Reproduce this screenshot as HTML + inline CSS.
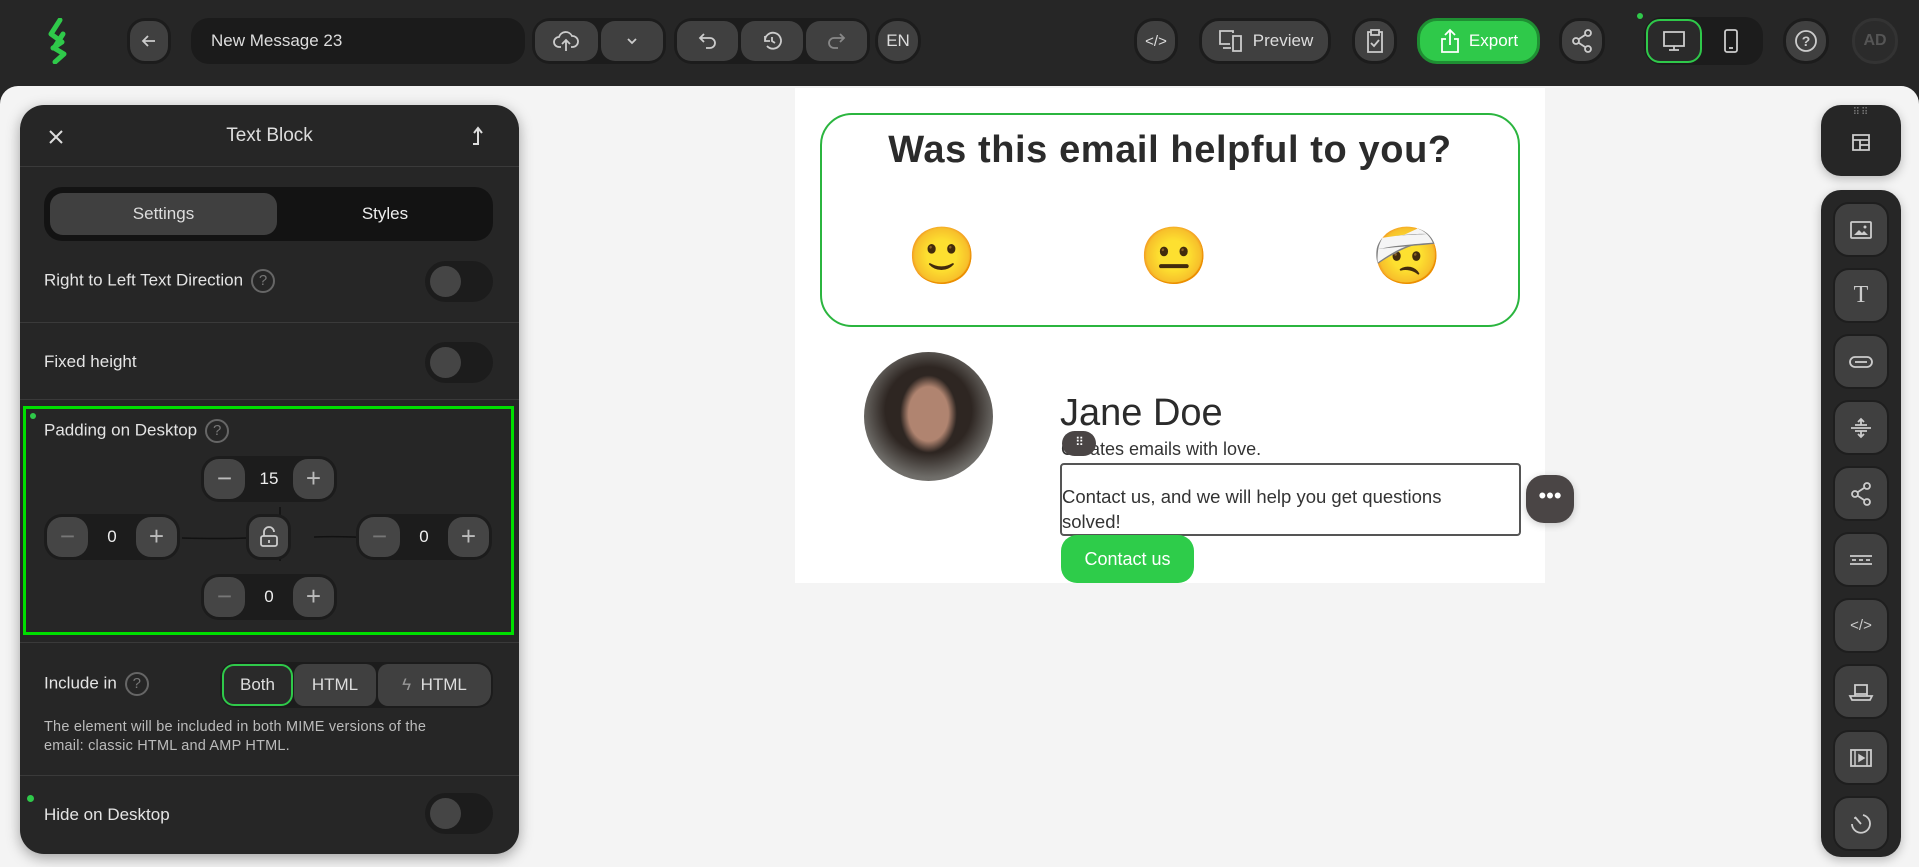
<!DOCTYPE html>
<html><head><meta charset="utf-8"><style>
*{box-sizing:border-box;margin:0;padding:0}
body{width:1919px;height:867px;background:#262626;position:relative;overflow:hidden;font-family:"Liberation Sans",sans-serif;color:#e6e6e6}
.a{position:absolute}
.canvas{left:0;top:86px;width:1919px;height:781px;background:#f4f4f4;border-radius:18px 18px 0 0}
.btn{position:absolute;background:#404040;border:3px solid #1c1c1c;border-radius:16px;display:flex;align-items:center;justify-content:center;color:#ddd;font-size:17px}
.grp{position:absolute;background:#1c1c1c;border-radius:18px;display:flex;padding:3px;gap:3px}
.grp div{background:#404040;border-radius:14px;flex:1;display:flex;align-items:center;justify-content:center}
svg{display:block}
.panel{left:20px;top:105px;width:499px;height:749px;background:#262626;border-radius:24px;box-shadow:0 4px 14px rgba(0,0,0,.35)}
.sep{position:absolute;left:0;width:499px;height:1px;background:#3a3a3a}
.lbl{position:absolute;font-size:17px;color:#e4e4e4}
.tog{position:absolute;width:68px;height:41px;border-radius:21px;background:#1c1c1c}
.tog:after{content:"";position:absolute;left:5px;top:5px;width:31px;height:31px;border-radius:50%;background:#454545}
.q{display:inline-block;width:24px;height:24px;border:2px solid #666;border-radius:50%;color:#777;font-size:15px;text-align:center;line-height:20px;vertical-align:middle;margin-left:8px}
.step{position:absolute;width:136px;height:46px;background:#1c1c1c;border-radius:18px}
.step .m,.step .p{position:absolute;top:3px;width:41px;height:40px;background:#454545;border-radius:15px;color:#bbb;font-size:26px;text-align:center;line-height:38px}
.step .m{left:3px}.step .p{right:3px}
.step .v{position:absolute;left:0;right:0;text-align:center;top:13px;font-size:17px;color:#eee}
.tb{position:absolute;left:12px;width:56px;height:55px;background:#404040;border:2px solid #1e1e1e;border-radius:16px;display:flex;align-items:center;justify-content:center}
</style></head><body>
<div class="a canvas"></div>

<!-- top bar -->
<svg class="a" style="left:46px;top:18px" width="24" height="46" viewBox="0 0 24 46"><path d="M14 2 L5 16 L16 24 L7 30 M17 16 L8 30 L18 36 L9 44" stroke="#2fc94a" stroke-width="5" fill="none" stroke-linecap="round" stroke-linejoin="round"/></svg>
<div class="btn" style="left:127px;top:18px;width:44px;height:46px;border-radius:18px"><svg width="18" height="18" viewBox="0 0 18 18"><path d="M15 9H3M8 4L3 9l5 5" stroke="#ccc" stroke-width="1.8" fill="none"/></svg></div>
<div class="a" style="left:191px;top:18px;width:334px;height:46px;background:#1b1b1b;border-radius:18px;font-size:17px;color:#ddd;padding:13px 20px">New Message 23</div>
<div class="grp" style="left:532px;top:18px;width:134px;height:46px"><div><svg width="26" height="24" viewBox="0 0 26 24"><path d="M8 18H6a5 5 0 0 1 0-10 7 7 0 0 1 13-1 5 5 0 0 1 1 11h-2M13 22V11M9 15l4-4 4 4" stroke="#ccc" stroke-width="1.8" fill="none"/></svg></div><div><svg width="14" height="10" viewBox="0 0 14 10"><path d="M3 3l4 4 4-4" stroke="#ccc" stroke-width="1.8" fill="none"/></svg></div></div>
<div class="grp" style="left:674px;top:18px;width:196px;height:46px"><div><svg width="22" height="22" viewBox="0 0 22 22"><path d="M7 4L3 8l4 4M3 8h10a5 5 0 0 1 0 10H9" stroke="#ccc" stroke-width="1.8" fill="none"/></svg></div><div><svg width="22" height="22" viewBox="0 0 22 22"><path d="M4 11a8 8 0 1 1 2 5M4 6v5h5M11 7v4l3 2" stroke="#ccc" stroke-width="1.8" fill="none"/></svg></div><div><svg width="22" height="22" viewBox="0 0 22 22"><path d="M15 4l4 4-4 4M19 8H9a5 5 0 0 0 0 10h4" stroke="#888" stroke-width="1.8" fill="none"/></svg></div></div>
<div class="btn" style="left:875px;top:18px;width:46px;height:46px;border-radius:22px">EN</div>
<div class="btn" style="left:1134px;top:18px;width:44px;height:46px;border-radius:20px;font-size:15px">&lt;/&gt;</div>
<div class="btn" style="left:1199px;top:18px;width:132px;height:46px;border-radius:20px;gap:8px"><svg width="28" height="26" viewBox="0 0 28 26"><path d="M16 5V3H3v13h10M6 20h8M16 8h8v15h-8z" stroke="#ccc" stroke-width="1.8" fill="none"/></svg>Preview</div>
<div class="btn" style="left:1352px;top:18px;width:45px;height:46px;border-radius:20px"><svg width="22" height="26" viewBox="0 0 22 26"><path d="M7 4H4v20h14V4h-3M7 2h8v5H7zM7 15l3 3 5-6" stroke="#ccc" stroke-width="1.8" fill="none"/></svg></div>
<div class="btn" style="left:1417px;top:18px;width:123px;height:46px;background:#2fc94a;border-color:#1f8f33;border-radius:20px;color:#fff;gap:8px"><svg width="22" height="26" viewBox="0 0 22 26"><path d="M7 11H3v13h16V11h-4M11 17V2M6 7l5-5 5 5" stroke="#fff" stroke-width="1.8" fill="none"/></svg>Export</div>
<div class="btn" style="left:1559px;top:18px;width:46px;height:46px;border-radius:20px"><svg width="22" height="24" viewBox="0 0 22 24"><circle cx="17" cy="4" r="3" stroke="#ccc" stroke-width="1.8" fill="none"/><circle cx="5" cy="12" r="3" stroke="#ccc" stroke-width="1.8" fill="none"/><circle cx="17" cy="20" r="3" stroke="#ccc" stroke-width="1.8" fill="none"/><path d="M8 10l6-4M8 14l6 4" stroke="#ccc" stroke-width="1.8"/></svg></div>
<div class="a" style="left:1637px;top:13px;width:6px;height:6px;border-radius:50%;background:#2fc94a"></div>
<div class="a" style="left:1644px;top:17px;width:119px;height:48px;background:#1c1c1c;border-radius:18px"></div>
<div class="a" style="left:1646px;top:19px;width:56px;height:44px;border:2px solid #2fc94a;border-radius:14px;background:#2a2a2a;display:flex;align-items:center;justify-content:center"><svg width="26" height="24" viewBox="0 0 26 24"><path d="M3 3h20v14H3zM13 17v4M8 21h10" stroke="#ccc" stroke-width="1.8" fill="none"/></svg></div>
<svg class="a" style="left:1723px;top:28px" width="16" height="26" viewBox="0 0 16 26"><rect x="2" y="2" width="12" height="22" rx="2" stroke="#ccc" stroke-width="1.8" fill="none"/><path d="M6 20h4" stroke="#ccc" stroke-width="1.8"/></svg>
<div class="btn" style="left:1783px;top:18px;width:46px;height:46px;border-radius:22px"><svg width="26" height="26" viewBox="0 0 26 26"><circle cx="13" cy="13" r="10" stroke="#ccc" stroke-width="1.8" fill="none"/><text x="13" y="18" text-anchor="middle" font-size="14" font-weight="bold" fill="#ccc" font-family="Liberation Sans">?</text></svg></div>
<div class="btn" style="left:1852px;top:18px;width:46px;height:46px;border-radius:22px;background:#2b2b2b;border-color:#333;color:#555;font-weight:bold;font-size:16px">AD</div>

<!-- email canvas -->
<div class="a" style="left:795px;top:88px;width:750px;height:495px;background:#fff"></div>
<div class="a" style="left:820px;top:113px;width:700px;height:214px;border:2px solid #2bb53f;border-radius:32px"></div>
<div class="a" style="left:820px;top:129px;width:700px;text-align:center;font-size:38px;font-weight:bold;color:#2b2b2b;letter-spacing:0.6px">Was this email helpful to you?</div>
<div class="a" style="left:907px;top:224px;font-size:56px;line-height:64px;font-family:'Noto Color Emoji','DejaVu Sans',sans-serif">🙂</div>
<div class="a" style="left:1139px;top:224px;font-size:56px;line-height:64px;font-family:'Noto Color Emoji','DejaVu Sans',sans-serif">😐</div>
<div class="a" style="left:1372px;top:224px;font-size:56px;line-height:64px;font-family:'Noto Color Emoji','DejaVu Sans',sans-serif">🤕</div>
<div class="a" style="left:864px;top:352px;width:129px;height:129px;border-radius:50%;background:radial-gradient(ellipse 22% 30% at 50% 48%,#b08470 0 70%,transparent 100%),radial-gradient(circle at 50% 45%,#2e2622 0 45%,#6e6c68 70%,#8a8884 100%)"></div>
<div class="a" style="left:1060px;top:392px;font-size:38px;color:#2b2b2b">Jane Doe</div>
<div class="a" style="left:1061px;top:439px;font-size:18px;color:#333">Creates emails with love.</div>
<div class="a" style="left:1062px;top:431px;width:34px;height:25px;border-radius:13px;background:#4a4545;color:#fff;font-size:12px;text-align:center;line-height:22px;letter-spacing:-1px">⠿</div>
<div class="a" style="left:1060px;top:463px;width:461px;height:73px;border:2px solid #555;border-radius:4px"></div>
<div class="a" style="left:1062px;top:484px;width:420px;font-size:18.5px;line-height:25px;color:#333">Contact us, and we will help you get questions solved!</div>
<div class="a" style="left:1526px;top:475px;width:48px;height:48px;border-radius:18px;background:#4a4545;color:#fff;font-size:22px;text-align:center;line-height:42px;box-shadow:0 2px 8px rgba(0,0,0,.2)">•••</div>
<div class="a" style="left:1061px;top:535px;width:133px;height:48px;border-radius:16px;background:#2ecc4a;color:#fff;font-size:18px;text-align:center;line-height:48px">Contact us</div>

<!-- panel -->
<div class="a panel">
 <svg class="a" style="left:28px;top:24px" width="16" height="16" viewBox="0 0 16 16"><path d="M2 2l12 12M14 2L2 14" stroke="#ddd" stroke-width="2"/></svg>
 <div class="a" style="left:0;width:499px;top:20px;text-align:center;font-size:19px;color:#ddd">Text Block</div>
 <svg class="a" style="left:450px;top:20px" width="16" height="22" viewBox="0 0 16 22"><path d="M3 19h5V4M4 8l4-5 4 5" stroke="#ddd" stroke-width="2" fill="none"/></svg>
 <div class="sep" style="top:61px"></div>
 <div class="a" style="left:24px;top:82px;width:449px;height:54px;background:#131313;border-radius:18px"></div>
 <div class="a" style="left:30px;top:88px;width:227px;height:42px;background:#404040;border-radius:13px;text-align:center;line-height:42px;font-size:17px;color:#ddd">Settings</div>
 <div class="a" style="left:257px;top:88px;width:216px;height:42px;text-align:center;line-height:42px;font-size:17px;color:#eee">Styles</div>
 <div class="lbl" style="left:24px;top:164px">Right to Left Text Direction<span class="q">?</span></div>
 <div class="tog" style="left:405px;top:156px"></div>
 <div class="sep" style="top:217px"></div>
 <div class="lbl" style="left:24px;top:247px">Fixed height</div>
 <div class="tog" style="left:405px;top:237px"></div>
 <div class="sep" style="top:294px"></div>
 <div class="a" style="left:3px;top:301px;width:491px;height:229px;border:3px solid #00e000"></div>
 <div class="a" style="left:10px;top:308px;width:6px;height:6px;border-radius:50%;background:#2fc94a"></div>
 <div class="lbl" style="left:24px;top:314px">Padding on Desktop<span class="q">?</span></div>
 <svg class="a" style="left:160px;top:400px" width="200" height="60"><path d="M2 33 Q40 34 66 33 M134 32 Q160 31 196 33 M100 2 V10 M100 56 V50" stroke="#111" stroke-width="1.5" fill="none"/></svg>
 <div class="step" style="left:181px;top:351px"><div class="m">−</div><div class="v">15</div><div class="p">+</div></div>
 <div class="step" style="left:24px;top:409px"><div class="m" style="color:#777">−</div><div class="v">0</div><div class="p">+</div></div>
 <div class="a" style="left:226px;top:409px;width:45px;height:46px;background:#454545;border:3px solid #1c1c1c;border-radius:15px;display:flex;align-items:center;justify-content:center"><svg width="20" height="22" viewBox="0 0 20 22"><path d="M5 10V6a5 5 0 0 1 10 0" stroke="#ccc" stroke-width="1.8" fill="none"/><rect x="2" y="10" width="16" height="10" rx="2" stroke="#ccc" stroke-width="1.8" fill="none"/><path d="M10 14v3" stroke="#ccc" stroke-width="1.8"/></svg></div>
 <div class="step" style="left:336px;top:409px"><div class="m" style="color:#777">−</div><div class="v">0</div><div class="p">+</div></div>
 <div class="step" style="left:181px;top:469px"><div class="m" style="color:#777">−</div><div class="v">0</div><div class="p">+</div></div>
 <div class="sep" style="top:537px"></div>
 <div class="lbl" style="left:24px;top:567px">Include in<span class="q">?</span></div>
 <div class="a" style="left:200px;top:557px;width:273px;height:46px;background:#1c1c1c;border-radius:16px"></div>
 <div class="a" style="left:202px;top:559px;width:71px;height:42px;border:2px solid #2fc94a;border-radius:12px;background:#2a2a2a;text-align:center;line-height:38px;font-size:17px;color:#ddd">Both</div>
 <div class="a" style="left:274px;top:559px;width:82px;height:42px;background:#404040;border-radius:10px;text-align:center;line-height:42px;font-size:17px;color:#ddd">HTML</div>
 <div class="a" style="left:358px;top:559px;width:113px;height:42px;background:#404040;border-radius:10px 14px 14px 10px;text-align:center;line-height:42px;font-size:17px;color:#ddd"><span style="color:#999">ϟ</span>&nbsp; HTML</div>
 <div class="a" style="left:24px;top:613px;width:415px;font-size:14.5px;line-height:19px;color:#bbb;letter-spacing:0.2px">The element will be included in both MIME versions of the email: classic HTML and AMP HTML.</div>
 <div class="sep" style="top:670px"></div>
 <div class="a" style="left:7px;top:690px;width:7px;height:7px;border-radius:50%;background:#2fc94a"></div>
 <div class="lbl" style="left:24px;top:700px">Hide on Desktop</div>
 <div class="tog" style="left:405px;top:688px"></div>
</div>

<!-- right toolbar -->
<div class="a" style="left:1821px;top:105px;width:80px;height:71px;background:#262626;border-radius:20px;box-shadow:0 3px 10px rgba(0,0,0,.25)">
 <div class="a" style="left:0;width:80px;top:2px;text-align:center;color:#777;font-size:10px;letter-spacing:1px">⠿⠿</div>
 <svg class="a" style="left:29px;top:26px" width="22" height="22" viewBox="0 0 22 22"><path d="M3 4h16v15H3zM3 9h16M10 9v10M10 14h9" stroke="#ccc" stroke-width="1.8" fill="none"/></svg>
</div>
<div class="a" style="left:1821px;top:190px;width:80px;height:667px;background:#262626;border-radius:20px;box-shadow:0 3px 10px rgba(0,0,0,.25)">
 <div class="tb" style="top:12px"><svg width="24" height="20" viewBox="0 0 24 20"><rect x="2" y="2" width="20" height="16" rx="1" stroke="#ccc" stroke-width="1.8" fill="none"/><path d="M5 15l5-5 3 3 2-2 4 4z" fill="#ccc"/><circle cx="16" cy="7" r="1.5" fill="#ccc"/></svg></div>
 <div class="tb" style="top:78px;font-family:'Liberation Serif',serif;font-size:24px;color:#ccc">T</div>
 <div class="tb" style="top:144px"><svg width="26" height="14" viewBox="0 0 26 14"><rect x="2" y="2" width="22" height="10" rx="5" stroke="#ccc" stroke-width="1.8" fill="none"/><path d="M7 7h12" stroke="#ccc" stroke-width="1.8"/></svg></div>
 <div class="tb" style="top:210px"><svg width="24" height="22" viewBox="0 0 24 22"><path d="M2 11h20M12 2v6M9 5l3-3 3 3M12 20v-6M9 17l3 3 3-3M6 8h12M6 14h12" stroke="#ccc" stroke-width="1.8" fill="none"/></svg></div>
 <div class="tb" style="top:276px"><svg width="22" height="24" viewBox="0 0 22 24"><circle cx="17" cy="4" r="3" stroke="#ccc" stroke-width="1.8" fill="none"/><circle cx="5" cy="12" r="3" stroke="#ccc" stroke-width="1.8" fill="none"/><circle cx="17" cy="20" r="3" stroke="#ccc" stroke-width="1.8" fill="none"/><path d="M8 10l6-4M8 14l6 4" stroke="#ccc" stroke-width="1.8"/></svg></div>
 <div class="tb" style="top:342px"><svg width="26" height="14" viewBox="0 0 26 14"><path d="M2 3h22M2 11h22M4 7h4M11 7h4M18 7h4" stroke="#ccc" stroke-width="1.8"/></svg></div>
 <div class="tb" style="top:408px;color:#ccc;font-size:15px">&lt;/&gt;</div>
 <div class="tb" style="top:474px"><svg width="26" height="20" viewBox="0 0 26 20"><path d="M7 3h12v9H7zM2 14h22l-2 4H4zM7 12v2M19 12v2" stroke="#ccc" stroke-width="1.8" fill="none"/></svg></div>
 <div class="tb" style="top:540px"><svg width="24" height="20" viewBox="0 0 24 20"><rect x="2" y="2" width="20" height="16" stroke="#ccc" stroke-width="1.8" fill="none"/><path d="M6 2v16M18 2v16M10 7l5 3-5 3z" stroke="#ccc" stroke-width="1.5" fill="#ccc"/></svg></div>
 <div class="tb" style="top:606px"><svg width="24" height="24" viewBox="0 0 24 24"><path d="M14 3a9 9 0 1 1-11 9M6 5l6 7" stroke="#ccc" stroke-width="1.8" fill="none"/><circle cx="6" cy="6" r="1" fill="#ccc"/></svg></div>
</div>
</body></html>
